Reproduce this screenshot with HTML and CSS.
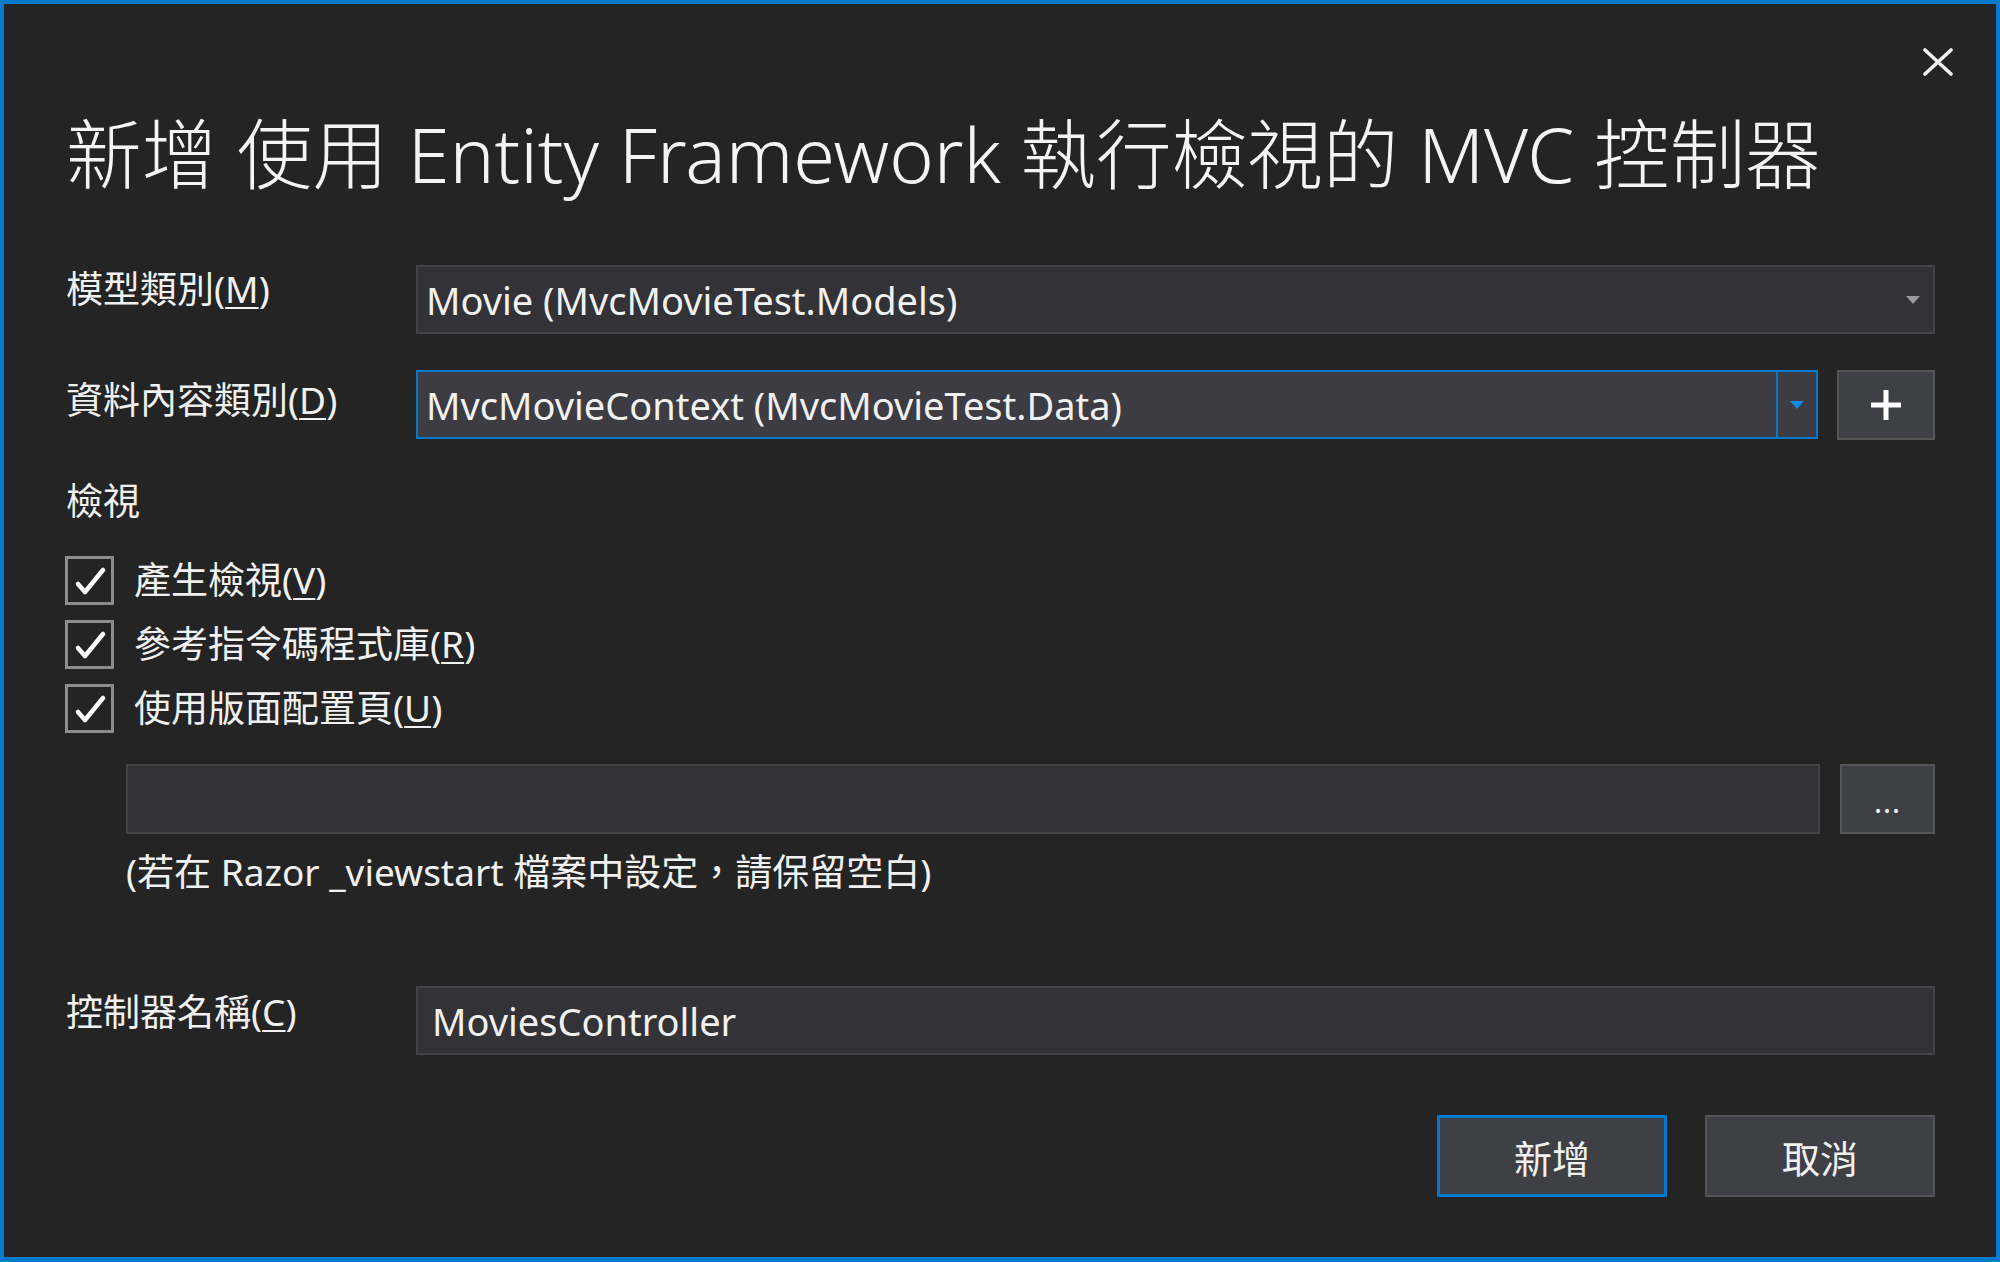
FILE: index.html
```html
<!DOCTYPE html>
<html lang="zh-Hant">
<head>
<meta charset="utf-8">
<title>新增 使用 Entity Framework 執行檢視的 MVC 控制器</title>
<link rel="stylesheet" href="styles.css">
</head>
<body>
<div class="dialog">
  <button class="close" aria-label="關閉">
    <svg width="32" height="28" viewBox="0 0 32 28"><path d="M3 2 L29 26 M29 2 L3 26" stroke="#f1f1f1" stroke-width="3.6" stroke-linecap="round" fill="none"/></svg>
  </button>
  <h1 class="title">新增 使用 Entity Framework 執行檢視的 MVC 控制器</h1>

  <div class="form-row row-model">
    <label class="label">模型類別(<u>M</u>)</label>
    <div class="combo">
      <span class="value">Movie (MvcMovieTest.Models)</span>
      <span class="arrow gray"></span>
    </div>
  </div>

  <div class="form-row row-context">
    <label class="label">資料內容類別(<u>D</u>)</label>
    <div class="combo focused">
      <span class="value">MvcMovieContext (MvcMovieTest.Data)</span>
      <span class="arrow-box"><span class="arrow blue"></span></span>
    </div>
    <button class="square-btn plus" aria-label="新增">
      <svg width="34" height="34" viewBox="0 0 34 34"><path d="M17 2 V32 M2 17 H32" stroke="#ffffff" stroke-width="5" fill="none"/></svg>
    </button>
  </div>

  <div class="section-label">檢視</div>

  <div class="checks">
    <div class="check-row">
      <span class="checkbox"><svg width="43" height="43" viewBox="0 0 43 43"><path d="M10 25 L17 33 L35 11" stroke="#ffffff" stroke-width="4.5" fill="none" stroke-linecap="round" stroke-linejoin="round"/></svg></span>
      <span class="check-label">產生檢視(<u>V</u>)</span>
    </div>
    <div class="check-row">
      <span class="checkbox"><svg width="43" height="43" viewBox="0 0 43 43"><path d="M10 25 L17 33 L35 11" stroke="#ffffff" stroke-width="4.5" fill="none" stroke-linecap="round" stroke-linejoin="round"/></svg></span>
      <span class="check-label">參考指令碼程式庫(<u>R</u>)</span>
    </div>
    <div class="check-row">
      <span class="checkbox"><svg width="43" height="43" viewBox="0 0 43 43"><path d="M10 25 L17 33 L35 11" stroke="#ffffff" stroke-width="4.5" fill="none" stroke-linecap="round" stroke-linejoin="round"/></svg></span>
      <span class="check-label">使用版面配置頁(<u>U</u>)</span>
    </div>
  </div>

  <div class="layout-row">
    <div class="textbox"></div>
    <button class="square-btn dots">...</button>
  </div>
  <div class="hint">(若在 Razor _viewstart 檔案中設定，請保留空白)</div>

  <div class="form-row row-controller">
    <label class="label">控制器名稱(<u>C</u>)</label>
    <div class="combo text-input"><span class="value">MoviesController</span></div>
  </div>

  <div class="actions">
    <button class="btn primary">新增</button>
    <button class="btn">取消</button>
  </div>
</div>
</body>
</html>
```

FILE: styles.css
```css
html, body {
  margin: 0;
  padding: 0;
  background: #242424;
}

.dialog {
  box-sizing: border-box;
  width: 2000px;
  height: 1262px;
  border: 4px solid #007acc;
  border-bottom-width: 5px;
  background: #242424;
  padding: 109px 61px 0 62px;
  position: relative;
  font-family: "Noto Sans", "Noto Sans CJK TC", sans-serif;
  color: #f1f1f1;
  overflow: hidden;
}

.close {
  position: absolute;
  top: 44px;
  right: 42px;
  width: 32px;
  height: 28px;
  padding: 0;
  margin: 0;
  border: 0;
  background: transparent;
  display: flex;
}

.title {
  margin: 0;
  height: 86px;
  font-size: 75.6px;
  line-height: 82px;
  font-weight: 300;
  white-space: nowrap;
  color: #f4f4f4;
}

.form-row {
  display: flex;
  align-items: flex-start;
}

.row-model { margin-top: 66px; }
.row-context { margin-top: 36px; }
.row-controller { margin-top: 94px; }

.label {
  flex: none;
  width: 350px;
  font-size: 37px;
  line-height: 40px;
  margin-top: 4px;
  white-space: nowrap;
}

.row-context .label { margin-top: 10px; }
.row-controller .label { margin-top: 6px; }

.combo {
  flex: 1;
  box-sizing: border-box;
  height: 69px;
  background: #333337;
  border: 2px solid #434346;
  display: flex;
  align-items: center;
  padding-left: 8px;
  font-size: 38px;
  color: #f1f1f1;
}

.combo .value {
  flex: 1;
  white-space: nowrap;
}

.text-input { padding-left: 14px; }

.combo.focused {
  background: #3c3c42;
  border-color: #007acc;
}

.arrow {
  width: 0;
  height: 0;
  border-left: 7px solid transparent;
  border-right: 7px solid transparent;
  border-top: 8px solid #9a9a9a;
}

.arrow.gray { margin-right: 13px; }

.arrow.blue { border-top-color: #0e8ae0; }

.arrow-box {
  align-self: stretch;
  width: 38px;
  border-left: 2px solid #007acc;
  display: flex;
  align-items: center;
  justify-content: center;
}

.square-btn {
  flex: none;
  box-sizing: border-box;
  background: #3f3f46;
  border: 2px solid #555555;
  color: #f1f1f1;
  padding: 0;
  margin: 0;
  display: flex;
  align-items: center;
  justify-content: center;
  font-family: inherit;
}

.plus {
  width: 98px;
  height: 70px;
  margin-left: 19px;
}

.section-label {
  margin-top: 41px;
  font-size: 37px;
  line-height: 40px;
}

.checks {
  margin-top: 27px;
}

.check-row {
  height: 64px;
  display: flex;
  align-items: center;
}

.checkbox {
  box-sizing: border-box;
  width: 49px;
  height: 49px;
  border: 3px solid #8c8c8c;
  display: flex;
  margin-left: -1px;
}

.check-label {
  margin-left: 20px;
  font-size: 37px;
  line-height: 40px;
  white-space: nowrap;
}

.layout-row {
  display: flex;
  margin-top: 24px;
  padding-left: 60px;
}

.textbox {
  flex: 1;
  box-sizing: border-box;
  height: 70px;
  background: #333337;
  border: 2px solid #434346;
}

.dots {
  width: 95px;
  height: 70px;
  margin-left: 20px;
  font-size: 30px;
  line-height: 1;
  padding-top: 6px;
  letter-spacing: 1px;
}

.hint {
  margin-top: 18px;
  padding-left: 60px;
  font-size: 37px;
  line-height: 40px;
  white-space: nowrap;
}

.actions {
  display: flex;
  justify-content: flex-end;
  gap: 38px;
  margin-top: 60px;
}

.btn {
  box-sizing: border-box;
  width: 230px;
  height: 82px;
  background: #3f3f46;
  border: 2px solid #555555;
  color: #f1f1f1;
  font-family: inherit;
  font-size: 38px;
  padding: 0;
  margin: 0;
}

.btn.primary {
  border: 3px solid #007acc;
}

u {
  text-decoration-thickness: 2px;
  text-underline-offset: 4px;
}
```
